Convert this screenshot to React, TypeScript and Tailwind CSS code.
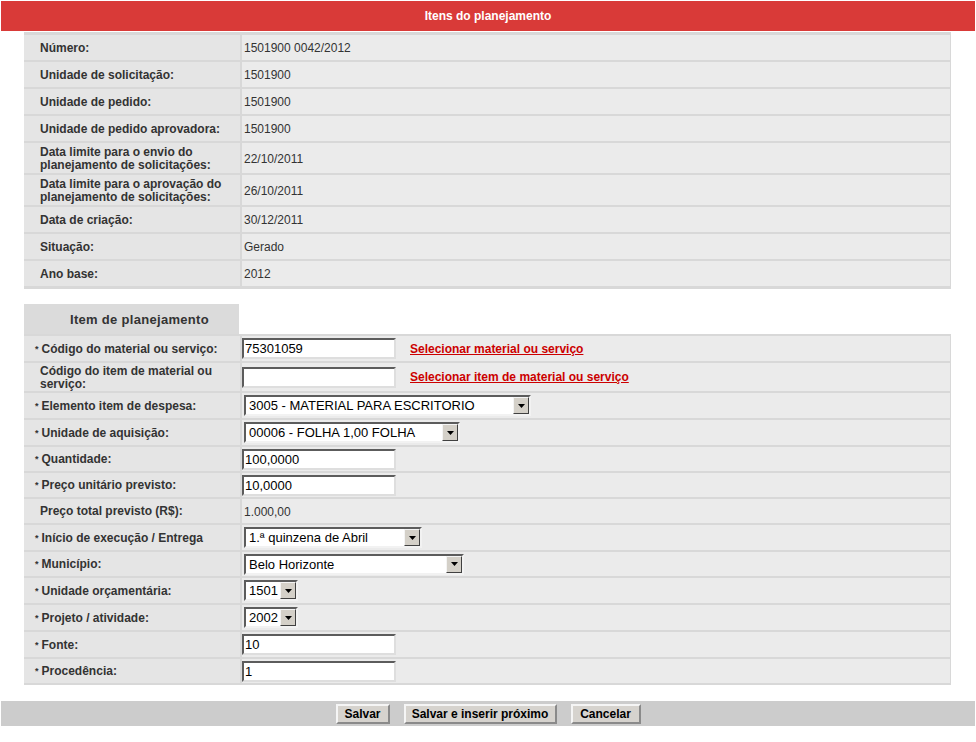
import React from "react";

const font = "font-['Liberation_Sans',Arial,sans-serif]";

type InfoRow = { label: React.ReactNode; value: string; tall?: boolean };

const infoRows: InfoRow[] = [
  { label: "Número:", value: "1501900 0042/2012" },
  { label: "Unidade de solicitação:", value: "1501900" },
  { label: "Unidade de pedido:", value: "1501900" },
  { label: "Unidade de pedido aprovadora:", value: "1501900" },
  {
    label: (
      <>
        Data limite para o envio do
        <br />
        planejamento de solicitações:
      </>
    ),
    value: "22/10/2011",
    tall: true,
  },
  {
    label: (
      <>
        Data limite para o aprovação do
        <br />
        planejamento de solicitações:
      </>
    ),
    value: "26/10/2011",
    tall: true,
  },
  { label: "Data de criação:", value: "30/12/2011" },
  { label: "Situação:", value: "Gerado" },
  { label: "Ano base:", value: "2012" },
];

const TextBox = ({ value }: { value: string }) => (
  <input
    readOnly
    value={value}
    className="w-[154px] h-[21px] bg-white border-2 border-t-[#5c5c5c] border-l-[#5c5c5c] border-r-[#dedede] border-b-[#dedede] px-[1px] text-[13px] text-black outline-none"
  />
);

const Select = ({ value, width }: { value: string; width: string }) => (
  <div
    className={`${width} h-[21px] ml-[2px] flex items-stretch bg-white border-2 border-t-[#5c5c5c] border-l-[#5c5c5c] border-r-[#f2f2f2] border-b-[#f2f2f2]`}
  >
    <span className="flex-1 pl-[3px] text-[13px] leading-[17px] text-black whitespace-nowrap overflow-hidden">
      {value}
    </span>
    <span className="w-[16px] bg-[#d4d0c8] border border-t-[#f4f4f4] border-l-[#f4f4f4] border-r-[#404040] border-b-[#404040] flex items-center justify-center">
      <svg width="7" height="4" viewBox="0 0 7 4">
        <path d="M0 0h7L3.5 4z" fill="#000" />
      </svg>
    </span>
  </div>
);

const Req = () => <span className="text-[9px] align-top -ml-[5px] mr-[3px]">*</span>;

const LinkText = ({ children }: { children: React.ReactNode }) => (
  <a className="ml-[14px] text-[12px] font-bold text-[#cc0000] underline cursor-pointer">{children}</a>
);

type FormRow = { label: React.ReactNode; req?: boolean; h: string; content: React.ReactNode };

const formRows: FormRow[] = [
  {
    label: "Código do material ou serviço:",
    req: true,
    h: "h-[25px]",
    content: (
      <>
        <TextBox value="75301059" />
        <LinkText>Selecionar material ou serviço</LinkText>
      </>
    ),
  },
  {
    label: (
      <>
        Código do item de material ou
        <br />
        serviço:
      </>
    ),
    h: "h-[28px]",
    content: (
      <>
        <TextBox value="" />
        <LinkText>Selecionar item de material ou serviço</LinkText>
      </>
    ),
  },
  {
    label: "Elemento item de despesa:",
    req: true,
    h: "h-[25px]",
    content: <Select value="3005 - MATERIAL PARA ESCRITORIO" width="w-[287px]" />,
  },
  {
    label: "Unidade de aquisição:",
    req: true,
    h: "h-[25px]",
    content: <Select value="00006 - FOLHA 1,00 FOLHA" width="w-[216px]" />,
  },
  { label: "Quantidade:", req: true, h: "h-[24px]", content: <TextBox value="100,0000" /> },
  { label: "Preço unitário previsto:", req: true, h: "h-[24px]", content: <TextBox value="10,0000" /> },
  {
    label: "Preço total previsto (R$):",
    h: "h-[24px]",
    content: <span className="pl-[2px] pt-[1px] text-[12px] text-[#333]">1.000,00</span>,
  },
  {
    label: "Início de execução / Entrega",
    req: true,
    h: "h-[25px]",
    content: <Select value="1.ª quinzena de Abril" width="w-[178px]" />,
  },
  {
    label: "Município:",
    req: true,
    h: "h-[24px]",
    content: <Select value="Belo Horizonte" width="w-[220px]" />,
  },
  {
    label: "Unidade orçamentária:",
    req: true,
    h: "h-[25px]",
    content: <Select value="1501" width="w-[54px]" />,
  },
  {
    label: "Projeto / atividade:",
    req: true,
    h: "h-[25px]",
    content: <Select value="2002" width="w-[54px]" />,
  },
  { label: "Fonte:", req: true, h: "h-[25px]", content: <TextBox value="10" /> },
  { label: "Procedência:", req: true, h: "h-[24px]", content: <TextBox value="1" /> },
];

const Button = ({ children, width }: { children: React.ReactNode; width: string }) => (
  <button
    className={`${width} h-[20px] bg-[#d6d3ce] border-2 border-t-[#f5f5f5] border-l-[#f5f5f5] border-r-[#8a8a8a] border-b-[#8a8a8a] text-[12px] font-bold text-black leading-none`}
  >
    {children}
  </button>
);

export default function App() {
  return (
    <div className={`${font} w-[976px] min-h-[742px] bg-white p-[1px]`}>
      <div className="h-[30px] bg-[#d93a38] flex items-center justify-center text-white text-[12px] font-bold">
        Itens do planejamento
      </div>

      <div className="mt-[1px] ml-[23px] w-[927px] bg-[#d8d8d8] pt-[3px] pb-[3px] pr-[1px] flex flex-col gap-[2px]">
        {infoRows.map((row, i) => (
          <div key={i} className={`grid grid-cols-[216px_1fr] gap-[2px] ${row.tall ? "h-[30px]" : "h-[25px]"}`}>
            <div className="bg-[#e5e5e5] pl-[16px] pt-[1px] flex items-center text-[12px] leading-[13px] font-bold text-[#333]">
              <span>{row.label}</span>
            </div>
            <div className="bg-[#ebebeb] pl-[2px] pt-[1px] flex items-center text-[12px] text-[#333]">{row.value}</div>
          </div>
        ))}
      </div>

      <div className="mt-[15px] ml-[23px] w-[215px] h-[30px] bg-[#dbdbdb] pl-[16px] pt-[1px] flex items-center justify-center text-[13px] font-bold tracking-[0.3px] text-[#333]">
        Item de planejamento
      </div>

      <div className="ml-[23px] w-[927px] bg-[#d8d8d8] pt-[2px] pb-[2px] pr-[1px] flex flex-col gap-[2px]">
        {formRows.map((row, i) => (
          <div key={i} className={`grid grid-cols-[216px_1fr] gap-[2px] ${row.h}`}>
            <div className="bg-[#e5e5e5] pl-[16px] pt-[1px] flex items-center text-[12px] leading-[13px] font-bold text-[#333]">
              <span>
                {row.req && <Req />}
                {row.label}
              </span>
            </div>
            <div className="bg-[#ebebeb] flex items-center">{row.content}</div>
          </div>
        ))}
      </div>

      <div className="mt-[16px] h-[25px] bg-[#cccccc] flex items-center justify-center gap-[14px]">
        <Button width="w-[54px]">Salvar</Button>
        <Button width="w-[153px]">Salvar e inserir próximo</Button>
        <Button width="w-[70px]">Cancelar</Button>
      </div>
    </div>
  );
}
